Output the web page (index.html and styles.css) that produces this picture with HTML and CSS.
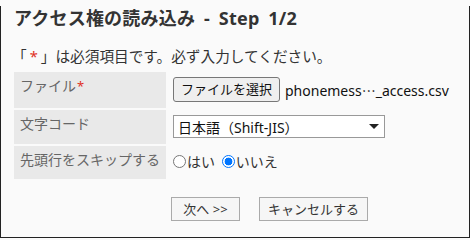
FILE: index.html
```html
<!DOCTYPE html>
<html lang="ja">
<head>
<meta charset="utf-8">
<link rel="stylesheet" href="styles.css">
</head>
<body>
<div class="frame">
  <h1 class="title">アクセス権の読み込み - Step 1/2</h1>
  <p class="note">「<span class="req star">*</span>」は必須項目です。必ず入力してください。</p>
  <table class="form">
    <tr>
      <th class="label">ファイル<span class="req">*</span></th>
      <td class="value">
        <span class="file"><span class="btn-file">ファイルを選択</span><span class="filename">phonemess⋯_access.csv</span></span>
      </td>
    </tr>
    <tr>
      <th class="label">文字コード</th>
      <td class="value">
        <span class="select"><span class="select-text">日本語（Shift-JIS）</span><span class="arrow"></span></span>
      </td>
    </tr>
    <tr>
      <th class="label">先頭行をスキップする</th>
      <td class="value radios">
        <label class="radio"><span class="dot"></span>はい</label>
        <label class="radio"><span class="dot checked"></span>いいえ</label>
      </td>
    </tr>
  </table>
  <div class="actions">
    <span class="btn next">次へ &gt;&gt;</span>
    <span class="btn cancel">キャンセルする</span>
  </div>
</div>
</body>
</html>
```

FILE: styles.css
```css
html, body {
  margin: 0;
  padding: 0;
  background: #fafafa;
}
body {
  font-family: "Noto Sans", "Noto Sans CJK JP", sans-serif;
  color: #333;
  font-size: 14px;
}
.frame {
  box-sizing: border-box;
  width: 470px;
  height: 232px;
  border-left: 1px solid #222;
  border-right: 1px solid #222;
  border-bottom: 1px solid #222;
  padding: 0 0 0 13px;
  background: #fafafa;
}
.title {
  margin: 6px 0 0 0;
  font-size: 18px;
  line-height: 24px;
  font-weight: bold;
  color: #333;
  word-spacing: 4px;
  letter-spacing: 0.2px;
}
.note {
  margin: 16px 0 0 -2px;
  line-height: 20px;
  font-size: 14.67px;
  color: #333;
}
.star {
  margin: 0 3px;
}
.req {
  color: #e0311f;
}
.form {
  border-collapse: separate;
  border-spacing: 0 2px;
  margin-top: 4px;
}
.label {
  width: 150px;
  box-sizing: border-box;
  background: #e9e9e9;
  color: #666;
  font-weight: normal;
  text-align: left;
  vertical-align: top;
  padding: 5px 6px 6px 6px;
  line-height: 18px;
  white-space: nowrap;
}
.label .req {
  vertical-align: top;
  font-size: 13px;
  margin-left: 1px;
}
.value {
  padding: 5px 7px 6px 7px;
  vertical-align: top;
}
.file {
  display: flex;
  align-items: center;
}
.btn-file {
  display: inline-block;
  box-sizing: border-box;
  width: 107px;
  height: 25px;
  line-height: 23px;
  text-align: center;
  font-size: 13px;
  border: 1px solid #777;
  border-radius: 3px;
  background: #efefef;
  color: #111;
}
.filename {
  margin-left: 5px;
  color: #111;
}
.select {
  display: flex;
  align-items: center;
  justify-content: space-between;
  box-sizing: border-box;
  width: 212px;
  height: 23px;
  border: 1px solid #999;
  background: #fff;
  padding: 0 5px 0 4px;
  color: #111;
}
.arrow {
  width: 0;
  height: 0;
  border-left: 5px solid transparent;
  border-right: 5px solid transparent;
  border-top: 5px solid #222;
}
.radios {
  line-height: 21px;
  white-space: nowrap;
}
.radio {
  display: inline-flex;
  align-items: center;
  margin-right: 3px;
}
.dot {
  box-sizing: border-box;
  width: 13px;
  height: 13px;
  border-radius: 50%;
  border: 1px solid #777;
  background: #fff;
  margin: 0 1px 0 0;
}
.dot.checked {
  border: 1px solid #0075ff;
  background: radial-gradient(circle, #0075ff 0 3.6px, #fff 4.2px);
}
.actions {
  margin-top: 16px;
  padding-left: 157px;
  display: flex;
  gap: 19px;
}
.btn {
  display: inline-block;
  box-sizing: border-box;
  height: 24px;
  line-height: 22px;
  font-size: 13px;
  border: 1px solid #aaa;
  background: #f6f6f6;
  color: #333;
  text-align: center;
}
.next {
  width: 69px;
}
.cancel {
  width: 109px;
}
```
